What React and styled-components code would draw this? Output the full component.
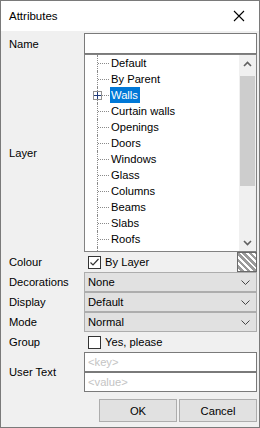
import React from 'react'
import styled, { createGlobalStyle } from 'styled-components'

const GlobalStyle = createGlobalStyle`
  html, body {
    margin: 0;
    padding: 0;
    background: #ffffff;
  }
  body {
    font-family: "Liberation Sans", Arial, sans-serif;
    font-size: 11.2px;
    color: #000000;
  }
`

const layers = [
  'Default',
  'By Parent',
  'Walls',
  'Curtain walls',
  'Openings',
  'Doors',
  'Windows',
  'Glass',
  'Columns',
  'Beams',
  'Slabs',
  'Roofs',
]

const Chevron = ({ up }) => (
  <svg width="9" height="6" viewBox="0 0 9 6">
    <path
      d={up ? 'M1 5 L4.5 1.5 L8 5' : 'M1 1 L4.5 4.5 L8 1'}
      fill="none"
      stroke="#606060"
      strokeWidth="1.6"
    />
  </svg>
)

const ThinChevron = () => (
  <svg width="9" height="5" viewBox="0 0 9 5">
    <path d="M0.5 0.5 L4.5 4.5 L8.5 0.5" fill="none" stroke="#444" strokeWidth="1" />
  </svg>
)

const Check = () => (
  <svg width="11" height="11" viewBox="0 0 11 11">
    <path d="M1.5 5.5 L4 8 L9.5 2" fill="none" stroke="#333" strokeWidth="1.2" />
  </svg>
)

const App = () => {
  return (
    <>
      <GlobalStyle />
      <Window>
        <TitleBar>
          <Title>Attributes</Title>
          <CloseIcon viewBox="0 0 12 12">
            <path d="M1 1 L11 11 M11 1 L1 11" stroke="#000" strokeWidth="1.1" />
          </CloseIcon>
        </TitleBar>
        <Body>
          <Form>
            <Label $h={21}>Name</Label>
            <TextBox $h={21} />

            <Label $h={198}>Layer</Label>
            <Tree>
              <TreeList>
                {layers.map((name) => (
                  <TreeRow key={name}>
                    <Connector>
                      {name === 'Walls' && (
                        <Expander>
                          <svg width="7" height="7" viewBox="0 0 7 7">
                            <path d="M0 3.5 H7 M3.5 0 V7" stroke="#1f3a7a" strokeWidth="1" />
                          </svg>
                        </Expander>
                      )}
                    </Connector>
                    <TreeText $selected={name === 'Walls'}>{name}</TreeText>
                  </TreeRow>
                ))}
                <TreeTail />
              </TreeList>
              <ScrollBar>
                <ScrollArrow><Chevron up /></ScrollArrow>
                <Track>
                  <Thumb />
                </Track>
                <ScrollArrow><Chevron /></ScrollArrow>
              </ScrollBar>
            </Tree>

            <Label $h={20}>Colour</Label>
            <ColourRow>
              <CheckLine>
                <CheckBox><Check /></CheckBox>
                <span>By Layer</span>
              </CheckLine>
              <Swatch />
            </ColourRow>

            <Label $h={20}>Decorations</Label>
            <Select>None<ThinChevron /></Select>

            <Label $h={20}>Display</Label>
            <Select>Default<ThinChevron /></Select>

            <Label $h={20}>Mode</Label>
            <Select>Normal<ThinChevron /></Select>

            <Label $h={20}>Group</Label>
            <CheckLine>
              <CheckBox />
              <span>Yes, please</span>
            </CheckLine>

            <Label $h={40}>User Text</Label>
            <Stack>
              <TextBox $h={20}><Placeholder>&lt;key&gt;</Placeholder></TextBox>
              <TextBox $h={20}><Placeholder>&lt;value&gt;</Placeholder></TextBox>
            </Stack>
          </Form>
          <Buttons>
            <Button>OK</Button>
            <Button>Cancel</Button>
          </Buttons>
        </Body>
      </Window>
    </>
  )
}

const Window = styled.div`
  width: 260px;
  height: 428px;
  box-sizing: border-box;
  border: 1px solid #7a7a7a;
  display: flex;
  flex-direction: column;
  background: #f0f0f0;
`
const TitleBar = styled.div`
  height: 30px;
  flex: none;
  background: #ffffff;
  display: flex;
  align-items: center;
  justify-content: space-between;
  padding: 0 14px 0 8px;
`
const Title = styled.span`
  font-size: 11.5px;
`
const CloseIcon = styled.svg`
  width: 12px;
  height: 12px;
`
const Body = styled.div`
  flex: 1;
  display: flex;
  flex-direction: column;
  padding: 2px 2px 0 0;
`
const Form = styled.div`
  display: grid;
  grid-template-columns: 83px 1fr;
  align-items: stretch;
`
const Label = styled.div`
  height: ${(p) => p.$h}px;
  display: flex;
  align-items: center;
  padding-left: 8px;
  white-space: nowrap;
`
const TextBox = styled.div`
  height: ${(p) => p.$h}px;
  box-sizing: border-box;
  border: 1px solid #7a7a7a;
  background: #ffffff;
  display: flex;
  align-items: center;
  padding-left: 3px;
`
const Placeholder = styled.span`
  color: #c4c4c4;
`
const Stack = styled.div`
  display: flex;
  flex-direction: column;
`
const Tree = styled.div`
  height: 198px;
  box-sizing: border-box;
  border: 1px solid #828282;
  background: #ffffff;
  display: flex;
  overflow: hidden;
`
const TreeList = styled.div`
  flex: 1;
  display: flex;
  flex-direction: column;
  padding-left: 12px;
`
const TreeRow = styled.div`
  height: 16px;
  flex: none;
  display: flex;
  align-items: stretch;
`
const Connector = styled.div`
  position: relative;
  width: 11px;
  margin-right: 1px;
  border-left: 1px dotted #8a8a8a;
  &::after {
    content: '';
    position: absolute;
    left: 0;
    right: 0;
    top: 8px;
    border-top: 1px dotted #8a8a8a;
  }
`
const TreeTail = styled.div`
  flex: 1;
  border-left: 1px dotted #8a8a8a;
`
const Expander = styled.div`
  position: absolute;
  left: -5px;
  top: 4px;
  width: 9px;
  height: 9px;
  box-sizing: border-box;
  border: 1px solid #919191;
  background: #ffffff;
  display: flex;
  align-items: center;
  justify-content: center;
  z-index: 1;
`
const TreeText = styled.span`
  display: flex;
  align-items: center;
  padding: 0 2px 0 1px;
  background: ${(p) => (p.$selected ? '#0078d7' : 'transparent')};
  color: ${(p) => (p.$selected ? '#ffffff' : '#000000')};
  white-space: nowrap;
`
const ScrollBar = styled.div`
  width: 17px;
  flex: none;
  background: #f0f0f0;
  display: flex;
  flex-direction: column;
`
const ScrollArrow = styled.div`
  height: 17px;
  display: flex;
  align-items: center;
  justify-content: center;
`
const Track = styled.div`
  flex: 1;
  padding-top: 4px;
`
const Thumb = styled.div`
  height: 110px;
  margin: 0 1px;
  background: #cdcdcd;
`
const ColourRow = styled.div`
  height: 20px;
  display: flex;
  justify-content: space-between;
  align-items: center;
`
const CheckLine = styled.div`
  height: 20px;
  display: flex;
  align-items: center;
  gap: 4px;
  padding-left: 4px;
`
const CheckBox = styled.div`
  width: 13px;
  height: 13px;
  box-sizing: border-box;
  border: 1px solid #333333;
  background: #ffffff;
  display: flex;
  align-items: center;
  justify-content: center;
`
const Swatch = styled.div`
  width: 20px;
  height: 20px;
  box-sizing: border-box;
  border: 1px solid #6a6a6a;
  background: repeating-linear-gradient(
    45deg,
    #ffffff 0px,
    #ffffff 2px,
    #9a9a9a 2px,
    #9a9a9a 4.5px
  );
`
const Select = styled.div`
  height: 20px;
  box-sizing: border-box;
  border: 1px solid #adadad;
  background: #e1e1e1;
  display: flex;
  align-items: center;
  justify-content: space-between;
  padding: 0 6px 0 3px;
`
const Buttons = styled.div`
  display: flex;
  justify-content: flex-end;
  gap: 2px;
  margin-top: 7px;
`
const Button = styled.div`
  width: 78px;
  height: 23px;
  box-sizing: border-box;
  border: 1px solid #adadad;
  background: #e1e1e1;
  display: flex;
  align-items: center;
  justify-content: center;
`

export default App
